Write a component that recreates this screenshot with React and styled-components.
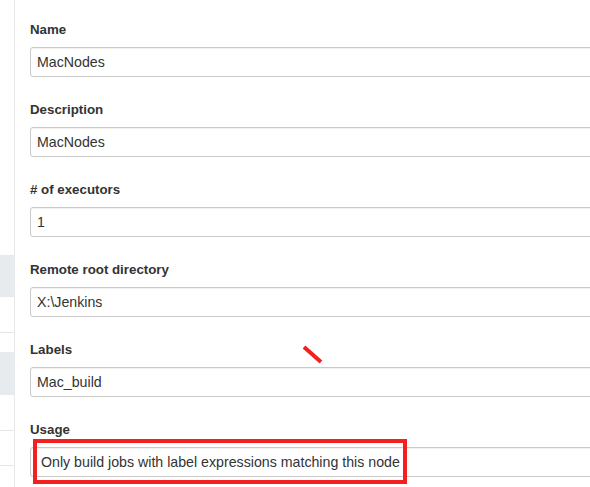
import React from "react";
import styled, { createGlobalStyle } from "styled-components";

const Global = createGlobalStyle`
  html, body { margin: 0; padding: 0; background: #fff; overflow: hidden; }
  body { font-family: "Liberation Sans", Arial, Helvetica, sans-serif; color: #333; }
`;

const Page = styled.div`
  position: relative;
  display: flex;
  width: 590px;
  height: 487px;
  overflow: hidden;
`;

const Sidebar = styled.nav`
  width: 14px;
  flex: none;
  display: flex;
  flex-direction: column;
  border-right: 1px solid #e6eaed;
`;

const NavSlot = styled.div`
  flex: none;
  height: ${(p) => p.$h}px;
  background: ${(p) => (p.$active ? "#e8ebee" : "transparent")};
  border-bottom: ${(p) => (p.$line ? "1px solid #e6e6e6" : "none")};
`;

const Main = styled.main`
  flex: none;
  width: 620px;
  padding: 21px 0 0 15px;
  display: flex;
  flex-direction: column;
`;

const Field = styled.div`
  display: flex;
  flex-direction: column;
  gap: 8px;
  margin-bottom: 24px;
`;

const Label = styled.label`
  font-size: 13.3px;
  line-height: 18px;
  font-weight: 700;
  color: #333;
`;

const Input = styled.div`
  box-sizing: border-box;
  height: 30px;
  border: 1px solid #c9c9c9;
  border-radius: 3px;
  box-shadow: inset 0 1px 1px rgba(0, 0, 0, 0.06);
  padding: 0 ${(p) => (p.$select ? 10 : 6)}px;
  display: flex;
  align-items: center;
  font-size: 14.2px;
  color: #333;
  background: #fff;
`;

const Highlight = styled.div`
  position: absolute;
  left: 33px;
  top: 439px;
  width: 374px;
  height: 45px;
  box-sizing: border-box;
  border: 4px solid #f41f1f;
  pointer-events: none;
`;

const Mark = styled.svg`
  position: absolute;
  left: 300px;
  top: 344px;
  width: 24px;
  height: 22px;
  pointer-events: none;
`;

const nav = [
  { h: 255 },
  { h: 42, active: true },
  { h: 35, line: true },
  { h: 19 },
  { h: 43, active: true },
  { h: 35, line: true },
  { h: 34, line: true },
  { h: 30 },
];

const fields = [
  { label: "Name", value: "MacNodes" },
  { label: "Description", value: "MacNodes" },
  { label: "# of executors", value: "1" },
  { label: "Remote root directory", value: "X:\\Jenkins" },
  { label: "Labels", value: "Mac_build" },
  { label: "Usage", value: "Only build jobs with label expressions matching this node", select: true },
];

export default function App() {
  return (
    <>
      <Global />
      <Page>
        <Sidebar>
          {nav.map((n, i) => (
            <NavSlot key={i} $h={n.h} $active={n.active} $line={n.line} />
          ))}
        </Sidebar>
        <Main>
          {fields.map((f) => (
            <Field key={f.label}>
              <Label>{f.label}</Label>
              <Input $select={f.select}>{f.value}</Input>
            </Field>
          ))}
        </Main>
        <Highlight />
        <Mark viewBox="0 0 24 22">
          <line x1="4" y1="3" x2="21" y2="18" stroke="#f41f1f" strokeWidth="4" />
        </Mark>
      </Page>
    </>
  );
}
